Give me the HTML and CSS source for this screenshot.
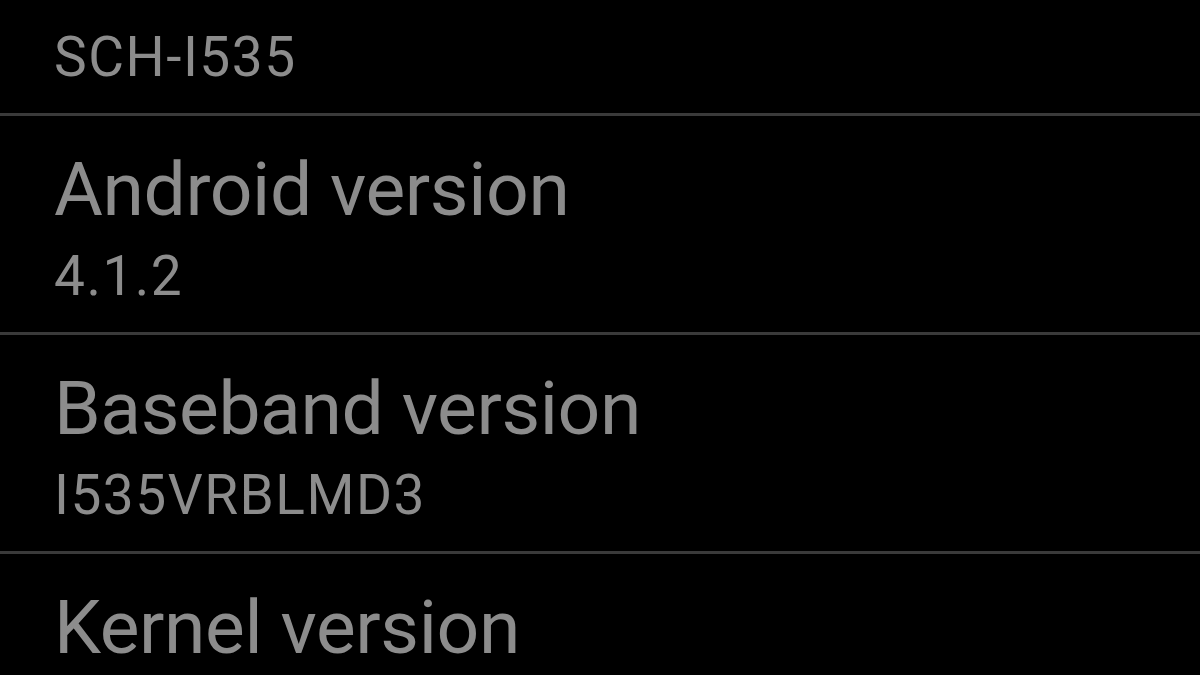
FILE: index.html
```html
<!DOCTYPE html>
<html>

<head>
  <meta charset="UTF-8" />
  <title>About phone</title>
  <link rel="stylesheet" href="styles.css">
</head>

<body>
  <div class="list">
    <div class="item item-first">
      <div class="summary">SCH-I535</div>
    </div>

    <div class="item">
      <div class="title">Android version</div>
      <div class="summary">4.1.2</div>
    </div>

    <div class="item">
      <div class="title">Baseband version</div>
      <div class="summary">I535VRBLMD3</div>
    </div>

    <div class="item">
      <div class="title">Kernel version</div>
    </div>
  </div>
</body>

</html>
```

FILE: styles.css
```css
html,
body {
  margin: 0;
  padding: 0;
  background-color: #000;
  overflow: hidden;
}

body {
  font-family: Roboto, "Noto Sans", sans-serif;
  color: #8c8c8c;
  width: 1200px;
  height: 675px;
}

.list {
  display: flex;
  flex-direction: column;
}

.item {
  padding: 33px 0 16px 54px;
  border-bottom: 3px solid #3a3a3a;
}

.item-first {
  padding-top: 17px;
}

.item:last-child {
  border-bottom: none;
}

.title {
  font-size: 75px;
  line-height: 80px;
  letter-spacing: -0.4px;
  white-space: nowrap;
}

.summary {
  font-size: 55px;
  line-height: 80px;
  letter-spacing: 1.5px;
  white-space: nowrap;
}

.title + .summary {
  margin-top: 7px;
}
```
